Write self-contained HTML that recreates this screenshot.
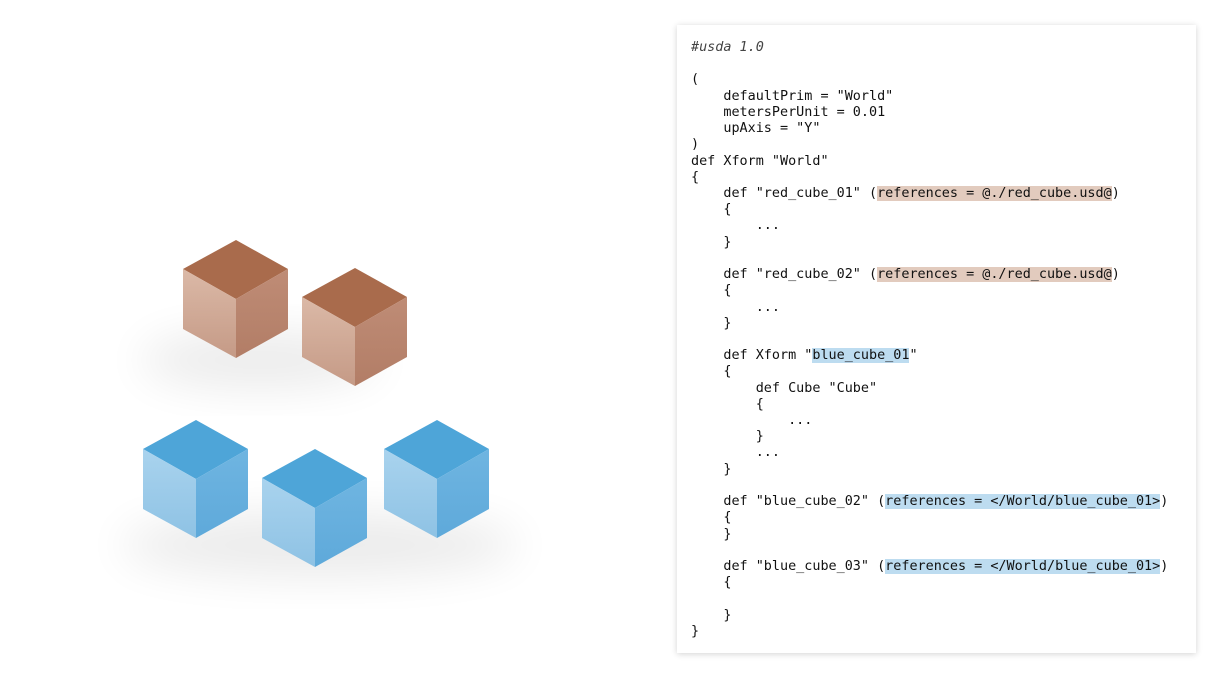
<!DOCTYPE html>
<html><head><meta charset="utf-8"><style>
html,body{margin:0;padding:0;background:#fff;width:1227px;height:684px;overflow:hidden;position:relative}
.card{position:absolute;left:677px;top:25px;width:519px;height:628px;background:#fff;box-shadow:0 1px 6px rgba(0,0,0,0.18)}
pre{position:absolute;left:691px;top:40px;margin:0;font-family:"DejaVu Sans Mono",monospace;font-size:13.45px;line-height:16.22px;color:#111}
i{color:#444}
.r{background:#e2cbbe}
.b{background:#bddcf0}
svg{position:absolute;left:0;top:0}
</style></head><body>
<svg width="660" height="684" viewBox="0 0 660 684">
<defs>
<filter id="bl" x="-50%" y="-50%" width="200%" height="200%"><feGaussianBlur stdDeviation="22"/></filter>
<linearGradient id="rl" x1="0" y1="0" x2="0" y2="1"><stop offset="0" stop-color="#dbb9a7"/><stop offset="1" stop-color="#c59a86"/></linearGradient>
<linearGradient id="rr" x1="0" y1="0" x2="0" y2="1"><stop offset="0" stop-color="#bf8c76"/><stop offset="1" stop-color="#b27d66"/></linearGradient>
<linearGradient id="bl2" x1="0" y1="0" x2="0" y2="1"><stop offset="0" stop-color="#a9d3ee"/><stop offset="1" stop-color="#8ec2e4"/></linearGradient>
<linearGradient id="br" x1="0" y1="0" x2="0" y2="1"><stop offset="0" stop-color="#6fb5e1"/><stop offset="1" stop-color="#5ea9da"/></linearGradient>
<g id="rc"><polygon points="0,0 52,29 0,59 -53,29" fill="#a96b4c"/><polygon points="-53,29 0,59 0,118 -53,89" fill="url(#rl)"/><polygon points="0,59 52,29 52,89 0,118" fill="url(#rr)"/></g>
<g id="bc"><polygon points="0,0 52,29 0,59 -53,29" fill="#4ea5d8"/><polygon points="-53,29 0,59 0,118 -53,89" fill="url(#bl2)"/><polygon points="0,59 52,29 52,89 0,118" fill="url(#br)"/></g>
</defs>
<ellipse cx="260" cy="360" rx="120" ry="28" fill="#000" opacity="0.08" filter="url(#bl)"/>
<ellipse cx="320" cy="545" rx="200" ry="32" fill="#000" opacity="0.08" filter="url(#bl)"/>
<use href="#rc" x="236" y="240"/>
<use href="#rc" x="355" y="268"/>
<use href="#bc" x="196" y="420"/>
<use href="#bc" x="437" y="420"/>
<use href="#bc" x="315" y="449"/>
</svg>
<div class="card"></div>
<pre><i>#usda 1.0</i>

(
    defaultPrim = "World"
    metersPerUnit = 0.01
    upAxis = "Y"
)
def Xform "World"
{
    def "red_cube_01" (<span class="r">references = @./red_cube.usd@</span>)
    {
        ...
    }

    def "red_cube_02" (<span class="r">references = @./red_cube.usd@</span>)
    {
        ...
    }

    def Xform "<span class="b">blue_cube_01</span>"
    {
        def Cube "Cube"
        {
            ...
        }
        ...
    }

    def "blue_cube_02" (<span class="b">references = &lt;/World/blue_cube_01&gt;</span>)
    {
    }

    def "blue_cube_03" (<span class="b">references = &lt;/World/blue_cube_01&gt;</span>)
    {

    }
}</pre>
</body></html>
